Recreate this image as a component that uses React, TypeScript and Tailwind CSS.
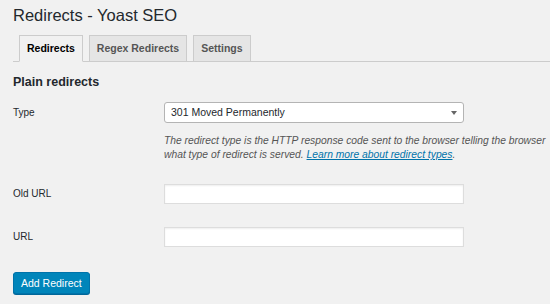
import React from "react";

export default function App() {
  return (
    <div
      className="w-[550px] h-[304px] overflow-hidden bg-[#f1f1f1] pl-[13px] text-[#23282d]"
      style={{ fontFamily: '"Liberation Sans", Arial, sans-serif' }}
    >
      <h1 className="pt-[5px] text-[16.5px] leading-[20px] font-normal text-[#23282d]">
        Redirects - Yoast SEO
      </h1>

      <div className="mt-[10px] flex gap-[6px] pl-[6px] border-b border-[#cccccc]">
        <div className="-mb-px h-[27px] px-[7px] border border-[#cccccc] border-b-[#f1f1f1] bg-[#f1f1f1] text-[10.5px] leading-[25px] font-bold text-[#000000]">
          Redirects
        </div>
        <div className="-mb-px h-[27px] px-[7px] border border-[#cccccc] bg-[#e5e5e5] text-[10.5px] leading-[25px] font-bold text-[#555555]">
          Regex Redirects
        </div>
        <div className="-mb-px h-[27px] px-[7px] border border-[#cccccc] bg-[#e5e5e5] text-[10.5px] leading-[25px] font-bold text-[#555555]">
          Settings
        </div>
      </div>

      <h2 className="mt-[12px] text-[12.5px] leading-[16px] font-bold text-[#23282d]">
        Plain redirects
      </h2>

      <div className="mt-[12px] flex items-center">
        <div className="w-[151px] text-[10px] leading-[14px]">Type</div>
        <div className="relative w-[300px] h-[21px] rounded-[3px] border border-[#b4b4b4] bg-white pl-[6px] text-[10.5px] leading-[19px] text-[#23282d]">
          301 Moved Permanently
          <svg
            className="absolute right-[6px] top-[8px]"
            width="6"
            height="4"
            viewBox="0 0 6 4"
          >
            <path d="M0 0 L6 0 L3 4 Z" fill="#666" />
          </svg>
        </div>
      </div>

      <div className="ml-[151px] mt-[11px] text-[10.3px] leading-[14px] italic text-[#555555] whitespace-nowrap">
        The redirect type is the HTTP response code sent to the browser telling the browser
        <br />
        what type of redirect is served.{" "}
        <span className="underline text-[#0073aa]">Learn more about redirect types</span>.
      </div>

      <div className="mt-[22px] flex items-center">
        <div className="w-[151px] text-[10px] leading-[14px]">Old URL</div>
        <div className="w-[300px] h-[20px] border border-[#dddddd] bg-white shadow-[inset_0_1px_2px_rgba(0,0,0,0.07)]" />
      </div>

      <div className="mt-[23px] flex items-center">
        <div className="w-[151px] text-[10px] leading-[14px]">URL</div>
        <div className="w-[300px] h-[20px] border border-[#dddddd] bg-white shadow-[inset_0_1px_2px_rgba(0,0,0,0.07)]" />
      </div>

      <div className="mt-[23px]">
        <button className="h-[22px] px-[7px] rounded-[3px] border border-[#0073aa] bg-[#0085ba] text-[10.5px] leading-[18px] text-white shadow-[0_1px_0_#006799]">
          Add Redirect
        </button>
      </div>
    </div>
  );
}
